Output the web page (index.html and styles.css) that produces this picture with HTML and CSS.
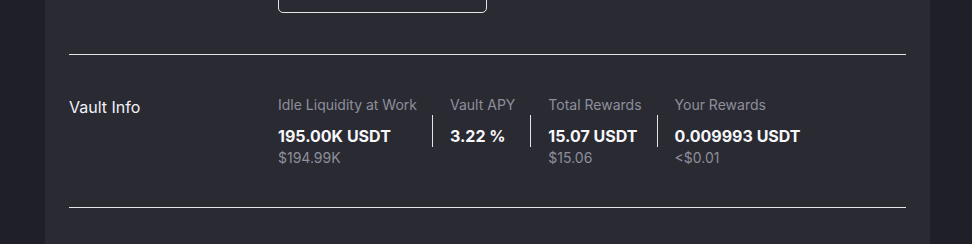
FILE: index.html
```html
<!DOCTYPE html>
<html lang="en">
<head>
    <meta charset="UTF-8">
    <meta name="viewport" content="width=device-width, initial-scale=1.0">
    <title>Vault</title>
    <link rel="stylesheet" href="styles.css">
</head>
<body>

    <div class="panel">
        <div class="deposit-row">
            <div class="amount-box">
                <span class="amount-placeholder">0.00</span>
            </div>
        </div>

        <div class="rule"></div>

        <div class="vault-info">
            <div class="section-title">Vault Info</div>
            <div class="stats">
                <div class="stat">
                    <p class="stat-label">Idle Liquidity at Work</p>
                    <p class="stat-value">195.00K USDT</p>
                    <p class="stat-sub">$194.99K</p>
                </div>
                <div class="stat-divider"></div>
                <div class="stat">
                    <p class="stat-label">Vault APY</p>
                    <p class="stat-value">3.22 %</p>
                </div>
                <div class="stat-divider"></div>
                <div class="stat">
                    <p class="stat-label">Total Rewards</p>
                    <p class="stat-value">15.07 USDT</p>
                    <p class="stat-sub">$15.06</p>
                </div>
                <div class="stat-divider"></div>
                <div class="stat">
                    <p class="stat-label">Your Rewards</p>
                    <p class="stat-value">0.009993 USDT</p>
                    <p class="stat-sub">&lt;$0.01</p>
                </div>
            </div>
        </div>

        <div class="rule"></div>
    </div>

</body>
</html>
```

FILE: styles.css
```css
* {
    margin: 0;
    padding: 0;
    box-sizing: border-box;
    font-family: Inter, "Noto Sans", sans-serif;
}

body {
    background-color: #1f1f27;
    color: #f2f2f7;
    overflow: hidden;
}

.panel {
    display: flow-root;
    background-color: #2a2a32;
    width: 885px;
    margin-left: 45px;
    padding: 0 24px;
    height: 244px;
}

.deposit-row {
    padding-left: 209px;
}

.amount-box {
    width: 209px;
    height: 44px;
    margin-top: -31px;
    border: 1px solid #e4e4ea;
    border-radius: 5px;
    padding: 0 18px;
    display: flex;
    align-items: center;
}

.amount-placeholder {
    font-size: 14px;
    color: #7b7e8c;
    margin-top: -6px;
}

.rule {
    height: 1px;
    background-color: #e4e4ea;
    margin-top: 41px;
}

.vault-info {
    display: flex;
    padding: 40px 0;
}

.vault-info + .rule {
    margin-top: 0;
}

.section-title {
    width: 209px;
    padding-top: 2px;
    font-size: 16px;
    line-height: 20px;
    color: #f2f2f7;
}

.stats {
    display: flex;
}

.stat {
    padding: 0 15px 0 17px;
}

.stat:first-child {
    padding-left: 0;
}

.stat-label {
    font-size: 14px;
    line-height: 20px;
    color: #8d8f9c;
}

.stat-value {
    font-size: 16px;
    font-weight: 700;
    line-height: 22px;
    margin-top: 10px;
    color: #f7f7fa;
}

.stat-sub {
    font-size: 14px;
    line-height: 18px;
    margin-top: 2px;
    color: #8d8f9c;
}

.stat-divider {
    width: 1px;
    height: 32px;
    margin-top: 20px;
    background-color: #e4e4ea;
}
```
